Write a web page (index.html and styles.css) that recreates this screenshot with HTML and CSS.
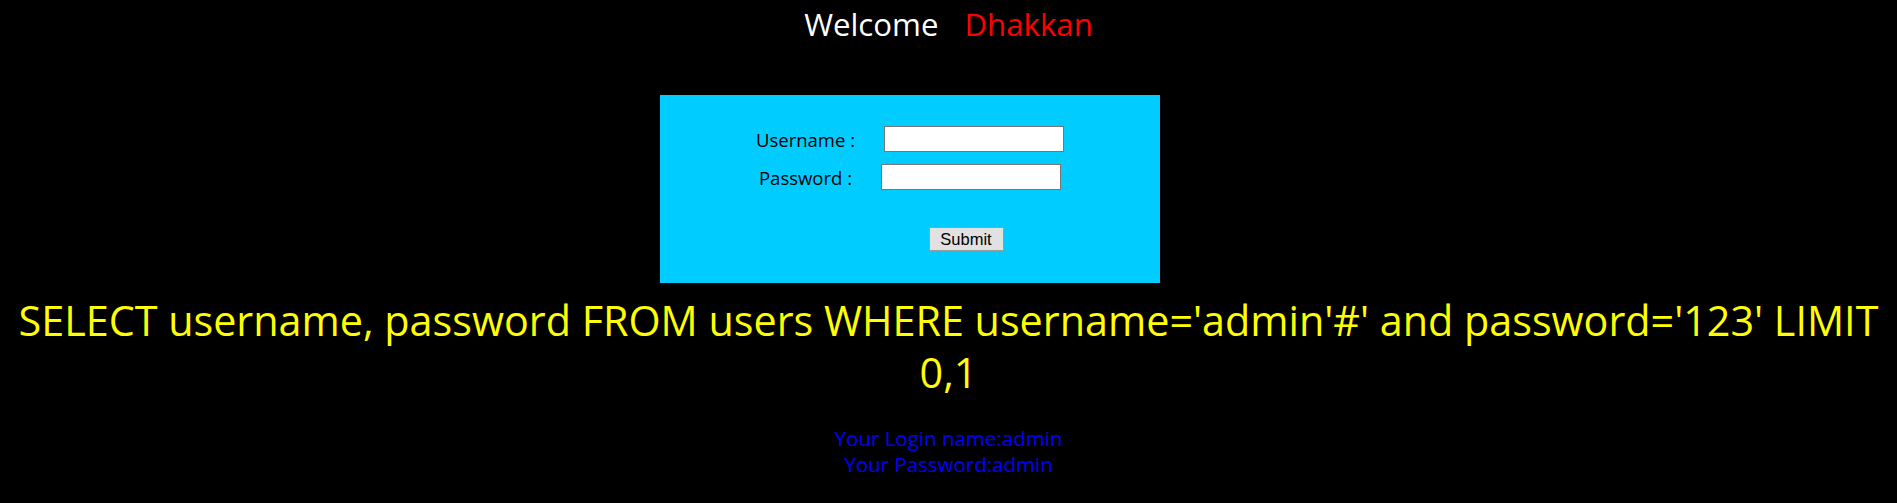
FILE: index.html
```html
<!DOCTYPE html>
<html>
<head>
<meta charset="utf-8">
<title>Less</title>
<link rel="stylesheet" href="styles.css">
</head>
<body>
<div class="welcome"><span class="hello">Welcome</span><span class="name">Dhakkan</span></div>
<div class="box">
  <form class="login" action="" method="post">
    <div class="row row-user"><label class="lbl">Username :</label><input class="field" type="text" name="uname" value=""></div>
    <div class="row row-pass"><label class="lbl">Password :</label><input class="field" type="text" name="passwd" value=""></div>
    <div class="row row-submit"><input class="submit" type="submit" name="submit" value="Submit"></div>
  </form>
</div>
<div class="query">SELECT username, password FROM users WHERE username='admin'#' and password='123' LIMIT 0,1</div>
<div class="result">
  <div>Your Login name:admin</div>
  <div>Your Password:admin</div>
</div>
</body>
</html>
```

FILE: styles.css
```css
html, body {
  margin: 0;
  padding: 0;
  background: #000000;
}
body {
  padding: 0 10px;
  font-family: "Open Sans", "Noto Sans", sans-serif;
}
.welcome {
  padding-top: 4px;
  font-size: 31.2px;
  line-height: 40px;
  text-align: center;
  color: #ffffff;
}
.welcome .name {
  color: #ff0000;
  margin-left: 26px;
}
.box {
  margin: 51px 0 0 650px;
  width: 500px;
  height: 188px;
  background: #00ccff;
  box-sizing: border-box;
  padding-top: 31px;
}
.login {
  margin: 0;
}
.row {
  display: flex;
  justify-content: center;
  align-items: center;
  gap: 29px;
  height: 26px;
}
.row-pass {
  margin-top: 12px;
}
.row-submit {
  margin-top: 37px;
  height: 24px;
  padding-left: 112px;
}
.lbl {
  font-size: 18.5px;
  color: #000000;
}
.field {
  width: 180px;
  height: 26px;
  box-sizing: border-box;
  border: 1px solid #767676;
  background: #ffffff;
  margin: 0;
  padding: 1px 3px;
}
.submit {
  width: 75px;
  height: 24px;
  box-sizing: border-box;
  margin: 0;
  padding: 0;
  border: 1px solid #9a9a9a;
  background: #e1e1e1;
  font-family: "Liberation Sans", Arial, sans-serif;
  font-size: 16.5px;
  color: #000000;
}
.query {
  margin-top: 11px;
  font-size: 41.3px;
  line-height: 52px;
  color: #ffff00;
  text-align: center;
}
.result {
  margin-top: 27px;
  font-size: 20.5px;
  line-height: 26px;
  color: #0000ff;
  text-align: center;
}
```
